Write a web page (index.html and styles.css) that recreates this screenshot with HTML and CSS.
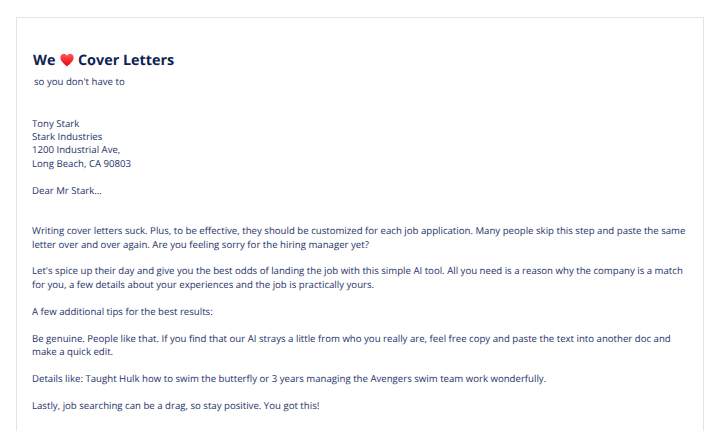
FILE: index.html
```html
<!DOCTYPE html>
<html lang="en">
<head>
<meta charset="utf-8">
<title>We Love Cover Letters</title>
<link rel="stylesheet" href="styles.css">
</head>
<body>
<main class="card">
  <header class="intro">
    <h1 class="title">We <svg class="heart" viewBox="0 0 16 16" role="img" aria-label="love"><defs><linearGradient id="h" x1="0" y1="0" x2="0" y2="1"><stop offset="0" stop-color="#ff5a5a"/><stop offset="1" stop-color="#e8000f"/></linearGradient></defs><path fill="url(#h)" d="M8 15.4C5.4 13 .4 9.6.4 5.2.4 2.6 2.3.9 4.4.9 6 .9 7.3 1.800 8 3.200 8.700 1.800 10 .9 11.600.9c2.100 0 4 1.700 4 4.300 0 4.400-5 7.800-7.600 10.200z"/></svg> Cover Letters</h1>
    <p class="subtitle">so you don't have to</p>
  </header>
  <section class="letter">
    <p class="address">Tony Stark<br>Stark Industries<br>1200 Industrial Ave,<br>Long Beach, CA 90803</p>
    <p class="greeting">Dear Mr Stark...</p>
    <p>Writing cover letters suck. Plus, to be effective, they should be customized for each job application. Many people skip this step and paste the same letter over and over again. Are you feeling sorry for the hiring manager yet?</p>
    <p>Let's spice up their day and give you the best odds of landing the job with this simple AI tool. All you need is a reason why the company is a match for you, a few details about your experiences and the job is practically yours.</p>
    <p>A few additional tips for the best results:</p>
    <p>Be genuine. People like that. If you find that our AI strays a little from who you really are, feel free copy and paste the text into another doc and make a quick edit.</p>
    <p>Details like: Taught Hulk how to swim the butterfly or 3 years managing the Avengers swim team work wonderfully.</p>
    <p>Lastly, job searching can be a drag, so stay positive. You got this!</p>
  </section>
</main>
</body>
</html>
```
FILE: styles.css
```css
html, body {
  margin: 0;
  padding: 0;
  background: #fff;
  height: 431px;
  overflow: hidden;
}
body {
  font-family: "Open Sans", "Liberation Sans", sans-serif;
  color: #27336a;
  text-rendering: geometricPrecision;
  padding: 17px 16px 0;
  box-sizing: border-box;
  display: flex;
  flex-direction: column;
}
.card {
  flex: 1;
  border: 1px solid #e4e4e4;
  border-bottom: 0;
  padding: 33px 15px 0;
  box-sizing: border-box;
}
.intro {
  padding-left: 1px;
}
.title {
  margin: 0;
  font-size: 14.4px;
  line-height: 20px;
  font-weight: 700;
  color: #0f1f55;
}
.heart {
  width: 14px;
  height: 14px;
  margin: 0 0.5px;
  vertical-align: -2px;
}
.subtitle {
  margin: 4px 0 0 1px;
  font-size: 9.65px;
  line-height: 14px;
}
.letter {
  margin-top: 27.5px;
  font-size: 9.65px;
  line-height: 13.44px;
}
.letter p {
  margin: 0 0 13.44px;
}
.letter .greeting {
  margin-bottom: 27px;
}
```
